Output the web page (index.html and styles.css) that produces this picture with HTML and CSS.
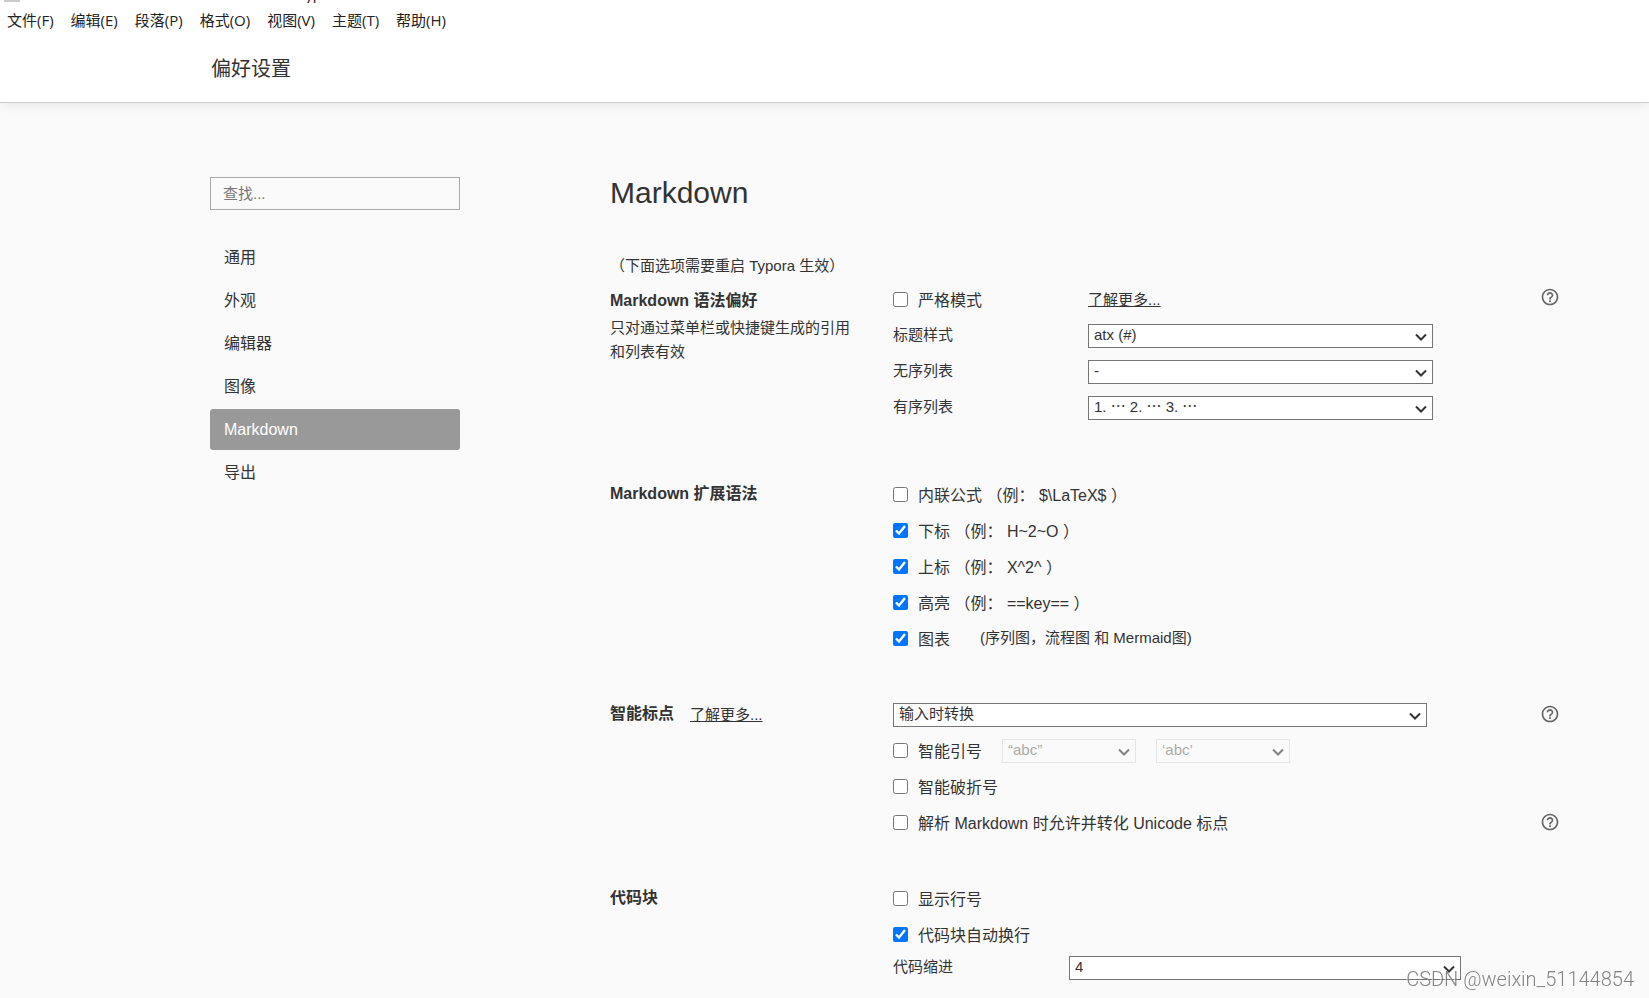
FILE: index.html
```html
<!DOCTYPE html>
<html lang="zh-CN">
<head>
<meta charset="utf-8">
<title>偏好设置</title>
<link rel="stylesheet" href="styles.css">
</head>
<body>
<div class="titlebar"><span class="titlebar-icon"></span><span class="titlebar-text">Typora</span></div>
<nav class="menubar">
  <button class="menu">文件(F)</button>
  <button class="menu">编辑(E)</button>
  <button class="menu">段落(P)</button>
  <button class="menu">格式(O)</button>
  <button class="menu">视图(V)</button>
  <button class="menu">主题(T)</button>
  <button class="menu">帮助(H)</button>
</nav>
<header class="page-header">偏好设置</header>

<div class="layout">
  <aside class="sidebar">
    <input class="search" type="search" placeholder="查找..." aria-label="查找">
    <nav class="nav">
      <a class="nav-item" href="#general">通用</a>
      <a class="nav-item" href="#appearance">外观</a>
      <a class="nav-item" href="#editor">编辑器</a>
      <a class="nav-item" href="#image">图像</a>
      <a class="nav-item nav-item-active" href="#markdown">Markdown</a>
      <a class="nav-item" href="#export">导出</a>
    </nav>
  </aside>

  <main class="content">
    <h1 class="title">Markdown</h1>
    <p class="notice">（下面选项需要重启 Typora 生效）</p>

    <section class="section section-first">
      <div class="section-label">
        <h2 class="section-title">Markdown 语法偏好</h2>
        <p class="section-desc">只对通过菜单栏或快捷键生成的引用和列表有效</p>
      </div>
      <div class="fields">
        <div class="row row-split">
          <label class="check"><input type="checkbox">严格模式</label>
          <a class="link" href="#strict">了解更多...</a>
        </div>
        <div class="row row-split">
          <label class="field-name" for="heading-style">标题样式</label>
          <select class="select" id="heading-style"><option>atx (#)</option></select>
        </div>
        <div class="row row-split">
          <label class="field-name" for="bullet-style">无序列表</label>
          <select class="select" id="bullet-style"><option>-</option></select>
        </div>
        <div class="row row-split">
          <label class="field-name" for="ordered-style">有序列表</label>
          <select class="select" id="ordered-style"><option>1. ⋯ 2. ⋯ 3. ⋯</option></select>
        </div>
      </div>
      <div class="helps">
        <button class="help" aria-label="帮助"><svg viewBox="0 0 24 24"><use href="#help-icon"/></svg></button>
      </div>
    </section>

    <section class="section">
      <div class="section-label"><h2 class="section-title">Markdown 扩展语法</h2></div>
      <div class="fields">
        <div class="row"><label class="check"><input type="checkbox">内联公式 （例： $\LaTeX$ ）</label></div>
        <div class="row"><label class="check"><input type="checkbox" checked>下标 （例： H~2~O ）</label></div>
        <div class="row"><label class="check"><input type="checkbox" checked>上标 （例： X^2^ ）</label></div>
        <div class="row"><label class="check"><input type="checkbox" checked>高亮 （例： ==key== ）</label></div>
        <div class="row row-note"><label class="check"><input type="checkbox" checked>图表</label><span class="field-name">(序列图，流程图 和 Mermaid图)</span></div>
      </div>
    </section>

    <section class="section">
      <div class="section-label section-label-inline">
        <h2 class="section-title">智能标点</h2>
        <a class="link" href="#punctuation">了解更多...</a>
      </div>
      <div class="fields">
        <div class="row"><select class="select select-wide" aria-label="智能标点"><option>输入时转换</option></select></div>
        <div class="row row-quotes">
          <label class="check"><input type="checkbox">智能引号</label>
          <select class="select select-small" aria-label="双引号" disabled><option>“abc”</option></select>
          <select class="select select-small" aria-label="单引号" disabled><option>‘abc’</option></select>
        </div>
        <div class="row"><label class="check"><input type="checkbox">智能破折号</label></div>
        <div class="row"><label class="check"><input type="checkbox">解析 Markdown 时允许并转化 Unicode 标点</label></div>
      </div>
      <div class="helps">
        <button class="help" aria-label="帮助"><svg viewBox="0 0 24 24"><use href="#help-icon"/></svg></button>
        <button class="help" aria-label="帮助"><svg viewBox="0 0 24 24"><use href="#help-icon"/></svg></button>
      </div>
    </section>

    <section class="section">
      <div class="section-label"><h2 class="section-title">代码块</h2></div>
      <div class="fields">
        <div class="row"><label class="check"><input type="checkbox">显示行号</label></div>
        <div class="row"><label class="check"><input type="checkbox" checked>代码块自动换行</label></div>
        <div class="row row-indent">
          <label class="field-name" for="indent">代码缩进</label>
          <select class="select" id="indent"><option>4</option></select>
        </div>
      </div>
    </section>
  </main>
</div>
<div class="watermark">CSDN @weixin_51144854</div>

<svg class="symbols" aria-hidden="true">
  <symbol id="help-icon" viewBox="0 0 24 24">
    <path fill="currentColor" d="M11 18h2v-2h-2v2zm1-16C6.480 2 2 6.480 2 12s4.480 10 10 10 10-4.480 10-10S17.520 2 12 2zm0 18c-4.410 0-8-3.590-8-8s3.590-8 8-8 8 3.590 8 8-3.590 8-8 8zm0-14c-2.210 0-4 1.790-4 4h2c0-1.100.9-2 2-2s2 .9 2 2c0 2-3 1.750-3 5h2c0-2.250 3-2.500 3-5 0-2.210-1.790-4-4-4z"/>
  </symbol>
</svg>
</body>
</html>
```
FILE: styles.css
```css
* { box-sizing: border-box; }

html { height: 100%; overflow: hidden; }

body {
  margin: 0;
  height: 100%;
  overflow: hidden;
  background: #fafafa;
  color: #333;
  font-family: "Liberation Sans", "Noto Sans CJK SC", sans-serif;
  font-size: 16px;
}

h1, h2, p { margin: 0; font-weight: normal; }
button, input, select { font-family: inherit; color: inherit; }
a { color: inherit; }

.titlebar {
  display: flex;
  align-items: flex-end;
  gap: 277px;
  height: 3px;
  padding-left: 4px;
  overflow: hidden;
  background: #fff;
  color: #111;
}
.titlebar-icon { width: 16px; height: 2px; margin-bottom: 1px; background: #ccc; }
.titlebar-text { font-family: "Open Sans", sans-serif; font-size: 15px; line-height: 18px; }

.menubar {
  position: relative;
  z-index: 1;
  display: flex;
  gap: 17px;
  height: 35px;
  padding: 0 0 2px 7px;
  background: #fff;
}
.menu {
  padding: 0;
  border: 0;
  background: none;
  color: #222;
  font-family: "Open Sans", "Noto Sans CJK SC", sans-serif;
  font-size: 15px;
}

.page-header {
  position: relative;
  height: 65px;
  padding-left: 211px;
  border-bottom: 1px solid #ccc;
  background: #fff;
  box-shadow: 0 2px 10px rgba(0, 0, 0, .08);
  font-size: 20px;
  line-height: 62px;
}

.layout {
  display: flex;
  gap: 150px;
  padding: 70px 90px 0 210px;
}

.sidebar { flex: 0 0 250px; padding-top: 4px; }
.search {
  display: block;
  width: 100%;
  height: 33px;
  padding: 0 12px;
  border: 1px solid #aaa;
  border-radius: 0;
  background: transparent;
  font-size: 15px;
  appearance: none;
}
.search::placeholder { color: #777; }
.nav { display: grid; gap: 2px; margin-top: 27px; }
.nav-item {
  padding: 0 14px;
  border-radius: 3px;
  line-height: 41px;
  text-decoration: none;
}
.nav-item-active { background: #999; color: #fff; }

.content { flex: 1; min-width: 0; }
.title { margin-bottom: 38px; font-size: 30px; line-height: 40px; }
.notice { padding-bottom: 1px; font-size: 15px; line-height: 29px; }

.section {
  display: grid;
  grid-template-columns: 243px minmax(0, 1fr) 18px;
  column-gap: 40px;
  margin-bottom: 40px;
}
.section-first { margin-bottom: 51px; }
.section-label { padding-top: 3px; }
.section-first .section-label { padding-top: 5px; }
.section-label-inline { display: flex; align-items: flex-start; gap: 16px; }
.section-title { font-size: 16px; font-weight: bold; line-height: 30px; }
.section-desc { font-size: 15px; line-height: 24px; }

.row { display: flex; align-items: center; height: 36px; }
.row-split { display: grid; grid-template-columns: 195px minmax(0, 345px); }
.row-note { gap: 30px; }
.row-quotes { gap: 20px; }
.row-indent {
  display: grid;
  grid-template-columns: 176px minmax(0, 392px);
  height: 30px;
}

.check { display: flex; align-items: center; gap: 10px; }
.check input { width: 15px; height: 15px; margin: 0; }
.field-name { padding-bottom: 3px; font-size: 15px; }
.link { padding-top: 1px; font-size: 15px; line-height: 30px; }

.select {
  width: 100%;
  height: 24px;
  margin-top: 1px;
  padding: 0 24px 2px 5px;
  border: 1px solid #767676;
  border-radius: 0;
  background: #fff url("data:image/svg+xml,%3Csvg xmlns='http://www.w3.org/2000/svg' viewBox='0 0 12 8'%3E%3Cpath d='M1 1.500l5 5 5-5' fill='none' stroke='%23333' stroke-width='2'/%3E%3C/svg%3E") no-repeat right 5px top 8px / 12px 8px;
  font-size: 15px;
  line-height: 20px;
  appearance: none;
}
.select-wide { max-width: 534px; }
.select-small { width: 134px; }
.select:disabled { border-color: #d8d8d8; background-color: transparent; color: #777; opacity: .6; }

.helps {
  display: flex;
  flex-direction: column;
  gap: 90px;
  padding-top: 9px;
  color: #666;
}
.section-first .helps { padding-top: 7px; }
.help { width: 18px; height: 18px; padding: 0; border: 0; background: none; }
.help svg { display: block; width: 20px; height: 20px; margin: -1px; }

.watermark {
  position: fixed;
  right: 15px;
  bottom: 5px;
  color: rgba(100, 100, 100, .8);
  font-family: Roboto, sans-serif;
  font-size: 20px;
  font-weight: 300;
  line-height: 28px;
  text-shadow: -1px -1px 0 rgba(255, 255, 255, .7);
}
.symbols { display: none; }
```
